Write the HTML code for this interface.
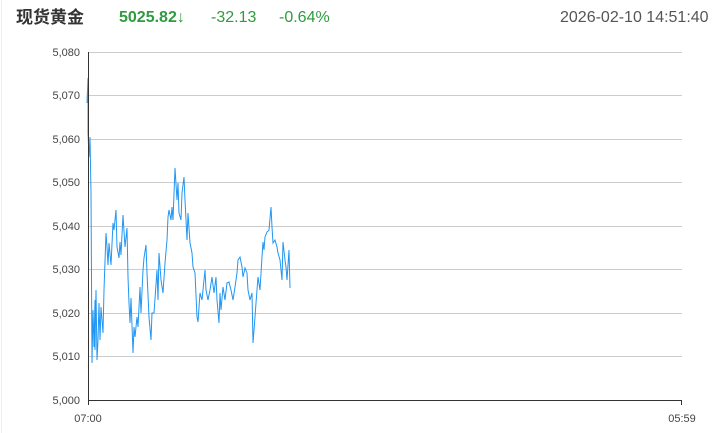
<!DOCTYPE html>
<html><head><meta charset="utf-8"><style>
html,body{margin:0;padding:0;background:#fff;width:724px;height:433px;overflow:hidden;font-family:"Liberation Sans","Noto Sans CJK SC",sans-serif;}
.l{position:absolute;left:1px;top:0;width:1px;height:433px;background:#eee}
.t{position:absolute;top:7px;font-size:16px;line-height:22px;white-space:nowrap}
</style></head><body>
<div class="l"></div>
<div class="t" style="left:16px;font-weight:bold;color:#333;font-size:17px">现货黄金</div>
<div class="t" style="left:119px;font-weight:bold;color:#2f9a3f">5025.82↓</div>
<div class="t" style="left:211px;color:#2f9a3f">-32.13</div>
<div class="t" style="left:279px;color:#2f9a3f">-0.64%</div>
<div class="t" style="left:560px;color:#555">2026-02-10 14:51:40</div>
<svg width="724" height="433" style="position:absolute;left:0;top:0" font-family="Liberation Sans, sans-serif" font-size="11" fill="#444">
<g stroke="#ccc" stroke-width="1">
<line x1="88" y1="52.5" x2="682" y2="52.5"/><line x1="88" y1="95.5" x2="682" y2="95.5"/><line x1="88" y1="139.5" x2="682" y2="139.5"/><line x1="88" y1="182.5" x2="682" y2="182.5"/><line x1="88" y1="226.5" x2="682" y2="226.5"/><line x1="88" y1="269.5" x2="682" y2="269.5"/><line x1="88" y1="313.5" x2="682" y2="313.5"/><line x1="88" y1="356.5" x2="682" y2="356.5"/>
</g>
<g text-anchor="end">
<text x="80" y="56">5,080</text><text x="80" y="99">5,070</text><text x="80" y="143">5,060</text><text x="80" y="186">5,050</text><text x="80" y="230">5,040</text><text x="80" y="273">5,030</text><text x="80" y="317">5,020</text><text x="80" y="360">5,010</text><text x="80" y="404">5,000</text>
</g>
<polyline fill="none" stroke="#2196f3" stroke-width="1" points="87,103 88,78 88,133 89,157 90,137 91,193 92,363 93,310 94,347 95,300 95,350 96,290 97,360 98,340 99,303 100,340 101,307 103,333 104,290 106,233 107,247 108,265 109,243 111,265 113,223 114,230 116,210 117,247 119,258 120,242 121,255 123,215 125,247 127,228 128,277 129,303 130,323 131,298 133,353 134,327 135,337 137,317 138,327 140,287 141,313 143,270 144,258 146,245 147,273 149,317 151,340 152,313 154,313 157,270 158,300 159,253 161,280 163,293 165,263 167,240 168,217 169,210 171,220 172,207 173,220 175,168 177,200 178,183 179,213 181,220 182,193 184,177 185,200 187,240 188,213 190,243 192,253 193,267 195,273 197,317 198,322 200,293 202,300 205,270 206,290 208,300 210,290 212,277 214,293 216,277 217,300 219,323 220,293 221,310 223,287 225,300 227,283 229,282 231,290 233,300 235,287 237,273 238,260 240,257 242,267 243,277 245,268 247,273 248,290 250,300 252,293 253,343 255,317 256,303 258,277 260,290 262,257 263,242 264,250 265,237 267,232 269,230 271,207 272,227 273,243 275,240 277,247 278,253 280,260 282,280 283,242 285,260 286,267 287,280 289,250 290,288"/>
<g stroke="#333" stroke-width="1">
<line x1="88.5" y1="52" x2="88.5" y2="400"/><line x1="88" y1="400.5" x2="682" y2="400.5"/>
<line x1="88.5" y1="400" x2="88.5" y2="405"/><line x1="681.5" y1="400" x2="681.5" y2="405"/>
</g>
<text x="88" y="422" text-anchor="middle">07:00</text>
<text x="682" y="422" text-anchor="middle">05:59</text>
</svg>
</body></html>
